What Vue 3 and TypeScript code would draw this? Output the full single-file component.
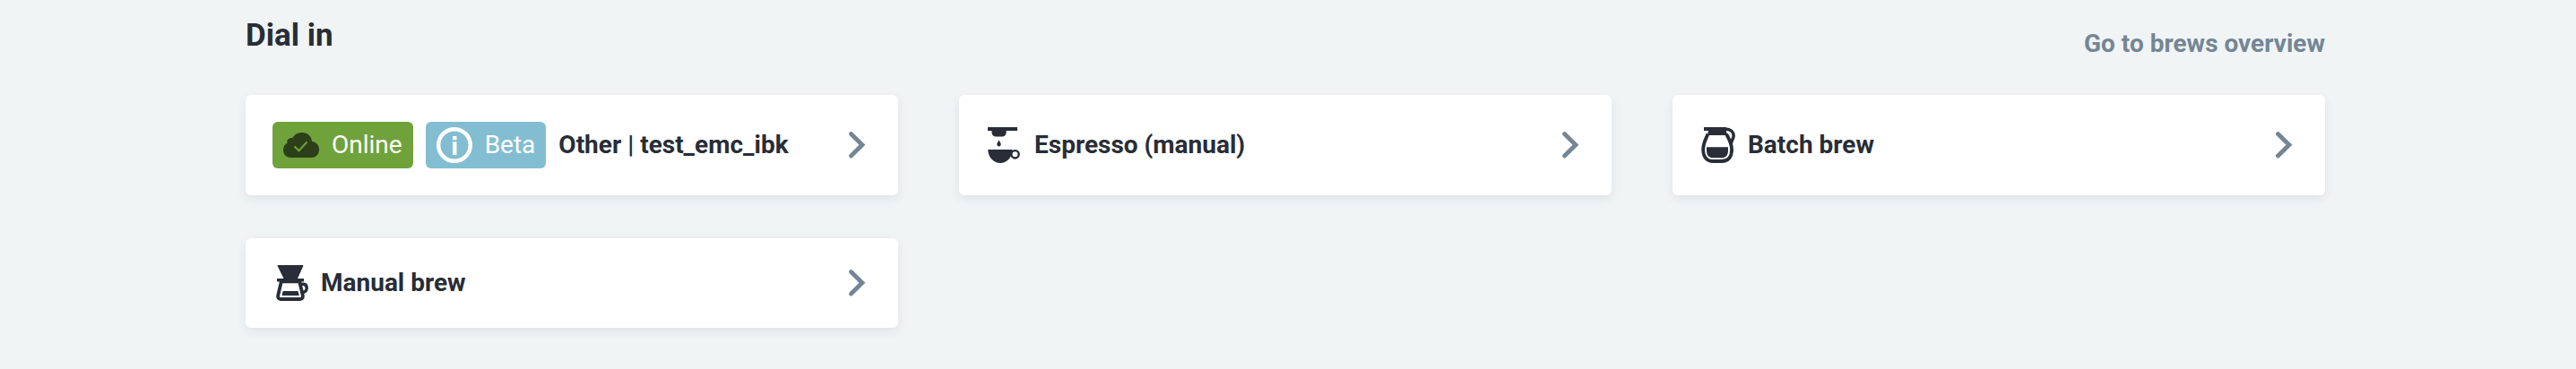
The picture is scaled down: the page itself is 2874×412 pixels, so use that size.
<script setup lang="ts">
type BrewIcon = 'espresso' | 'batch' | 'manual'

interface Preparation {
  title: string
  icon?: BrewIcon
  online?: boolean
  beta?: boolean
}

const preparations: Preparation[] = [
  { title: 'Other | test_emc_ibk', online: true, beta: true },
  { title: 'Espresso (manual)', icon: 'espresso' },
  { title: 'Batch brew', icon: 'batch' },
  { title: 'Manual brew', icon: 'manual' },
]
</script>

<template>
  <section class="dial-in">
    <header class="header">
      <h2 class="heading">Dial in</h2>
      <a class="overview" href="#brews">Go to brews overview</a>
    </header>

    <div class="grid">
      <a v-for="item in preparations" :key="item.title" class="card" href="#brew">
        <span v-if="item.online" class="badge online">
          <svg class="icon" viewBox="0 0 40 40" aria-hidden="true">
            <path
              fill="#2c3f19"
              d="M9 34C4 34 0 30.500 0 25.500C0 21.500 2 18.800 4.600 17.700C3.300 14 6.500 11.500 10.500 12C12.500 8 16.500 6 21 6C27 6 31.500 10 32 15.800C36.700 16.500 40 20 40 25C40 30 36.500 34 31.500 34Z"
            />
            <path d="M12.500 21.500L17.500 26.300L26.500 16.500" fill="none" stroke="#6fa23b" stroke-width="2" />
          </svg>
          <span>Online</span>
        </span>
        <span v-if="item.beta" class="badge beta">
          <svg class="icon" viewBox="0 0 40 40" aria-hidden="true">
            <circle cx="20" cy="20" r="17.800" fill="none" stroke="#fff" stroke-width="4.400" />
            <path fill="#fff" d="M18 10h4.500v4.300H18zM18 16.300h4.500V31H18z" />
          </svg>
          <span>Beta</span>
        </span>

        <svg v-if="item.icon === 'espresso'" class="icon" viewBox="0 0 40 40" aria-hidden="true">
          <path fill="currentColor" d="M2 0H35V4H22.700V5.500C22.700 8.500 20.800 10.500 18 10.500H11.500C8.500 10.500 6.500 8.500 6.500 5.500V4H2Z" />
          <path fill="currentColor" d="M14.500 14.500C15.500 16.500 16.700 17.700 16.700 19.200A2.200 2.200 0 0 1 12.300 19.200C12.300 17.700 13.500 16.500 14.500 14.500Z" />
          <path fill="currentColor" d="M2.300 25H29.500C29.500 33 24 40 16 40C8 40 2.300 33 2.300 25Z" />
          <circle cx="32.500" cy="30.300" r="4.200" fill="#fff" stroke="currentColor" stroke-width="2.400" />
        </svg>

        <svg v-else-if="item.icon === 'batch'" class="icon" viewBox="0 0 40 40" aria-hidden="true">
          <path
            fill="none"
            stroke="currentColor"
            stroke-width="3.800"
            d="M9.500 7.500C7 14 4.200 17.500 4.200 25C4.200 33.500 8.500 38 15.500 38H25C32 38 36.100 33.500 36.100 25C36.100 17.500 33 13.500 30 7.500"
          />
          <path fill="currentColor" d="M5 0H30V4L31 9H9L10 4H5Z" />
          <path fill="none" stroke="currentColor" stroke-width="3.500" d="M29 1.900C35 1.900 38.200 5.500 38.200 9.500C38.200 12.500 36 14.500 35.300 18.500" />
          <path fill="currentColor" d="M8 22.300H32V26C32 31.500 29.500 34.300 24.500 34.300H15.500C10.500 34.300 8 31.500 8 26Z" />
        </svg>

        <svg v-else-if="item.icon === 'manual'" class="icon" viewBox="0 0 40 40" aria-hidden="true">
          <path fill="currentColor" d="M6.300 0H33.700Q34.800 0 34.300 1L28 15H35V18.400H5V15H12.500L5.600 1Q5.200 0 6.300 0Z" />
          <path
            fill="none"
            stroke="currentColor"
            stroke-width="3.800"
            stroke-linejoin="round"
            d="M9.800 18.300L6.200 34C5.700 36.500 7 38 9 38H31C33 38 34.300 36.500 33.800 34L30.200 18.300Z"
          />
          <path fill="none" stroke="currentColor" stroke-width="3.400" d="M31.500 21.300H34.300C36.800 21.300 38.200 23 38.200 25.500C38.200 28.500 36.300 30.400 33 30.400" />
          <path fill="currentColor" d="M11.700 29H28.500L29.800 34H10.500Z" />
        </svg>

        <span class="title">{{ item.title }}</span>
        <svg class="icon chevron" viewBox="0 0 40 40" aria-hidden="true">
          <path
            d="M17.500 7.500L30 19.700L17.500 32"
            fill="none"
            stroke="currentColor"
            stroke-width="4.800"
            stroke-linecap="round"
          />
        </svg>
      </a>
    </div>
  </section>
</template>

<style>
body {
  background: #f0f4f5;
}
</style>

<style scoped>
.dial-in {
  padding: 16px 280px 46px 274px;
  font-family: Roboto, sans-serif;
  font-size: 28px;
  line-height: 40px;
  color: #282d37;
}

.header {
  display: flex;
  align-items: flex-end;
  justify-content: space-between;
  margin-bottom: 36px;
}

.heading {
  margin: 0;
  padding-bottom: 6px;
  font-size: 35px;
  line-height: 48px;
  font-weight: 700;
}

.overview {
  padding-bottom: 1px;
  font-weight: 700;
  color: #748695;
  text-decoration: none;
}

.grid {
  display: grid;
  grid-template-columns: repeat(3, minmax(0, 1fr));
  gap: 48px 68px;
}

.card {
  display: flex;
  align-items: center;
  gap: 14px;
  padding: 30px;
  border-radius: 6px;
  background: #fff;
  box-shadow: 0 4px 12px rgba(38, 44, 54, 0.08);
  color: inherit;
  text-decoration: none;
}

.badge {
  display: flex;
  align-items: center;
  gap: 14px;
  padding: 6px 12px;
  border-radius: 6px;
  color: #fff;
}

.online {
  background: #6fa23b;
}

.beta {
  background: #83bdd1;
}

.icon {
  flex: none;
  width: 40px;
  height: 40px;
}

.title {
  flex: 1;
  font-weight: 700;
}

.chevron {
  color: #748695;
}
</style>
